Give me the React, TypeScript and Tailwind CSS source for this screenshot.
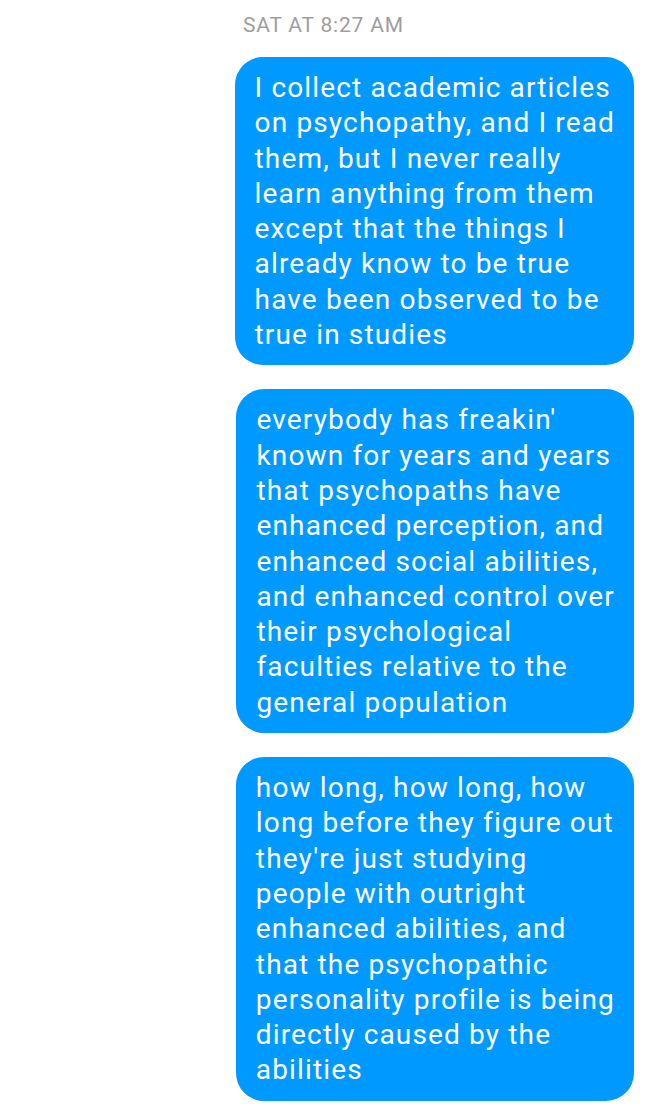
import React from "react";

const messages: string[][] = [
  [
    "I collect academic articles",
    "on psychopathy, and I read",
    "them, but I never really",
    "learn anything from them",
    "except that the things I",
    "already know to be true",
    "have been observed to be",
    "true in studies",
  ],
  [
    "everybody has freakin'",
    "known for years and years",
    "that psychopaths have",
    "enhanced perception, and",
    "enhanced social abilities,",
    "and enhanced control over",
    "their psychological",
    "faculties relative to the",
    "general population",
  ],
  [
    "how long, how long, how",
    "long before they figure out",
    "they're just studying",
    "people with outright",
    "enhanced abilities, and",
    "that the psychopathic",
    "personality profile is being",
    "directly caused by the",
    "abilities",
  ],
];

export default function App() {
  return (
    <div
      className="w-[648px] h-[1117px] bg-white overflow-hidden"
      style={{ fontFamily: "Roboto, 'Noto Sans', sans-serif" }}
    >
      <div className="pt-[11px] pl-[243px] text-[21px] leading-[28px] tracking-[0.8px] text-[#9e9e9e]">
        SAT AT 8:27 AM
      </div>
      <div className="flex flex-col items-end gap-[24px] pr-[14px] mt-[18px]">
        {messages.map((lines, i) => (
          <div
            key={i}
            className="bg-[#0099ff] text-white rounded-[28px] pl-[20px] pr-[19px] pt-[13px] pb-[13px] text-[28px] leading-[35.3px] tracking-[1.15px] whitespace-nowrap"
          >
            {lines.map((l, j) => (
              <div key={j}>{l}</div>
            ))}
          </div>
        ))}
      </div>
    </div>
  );
}
